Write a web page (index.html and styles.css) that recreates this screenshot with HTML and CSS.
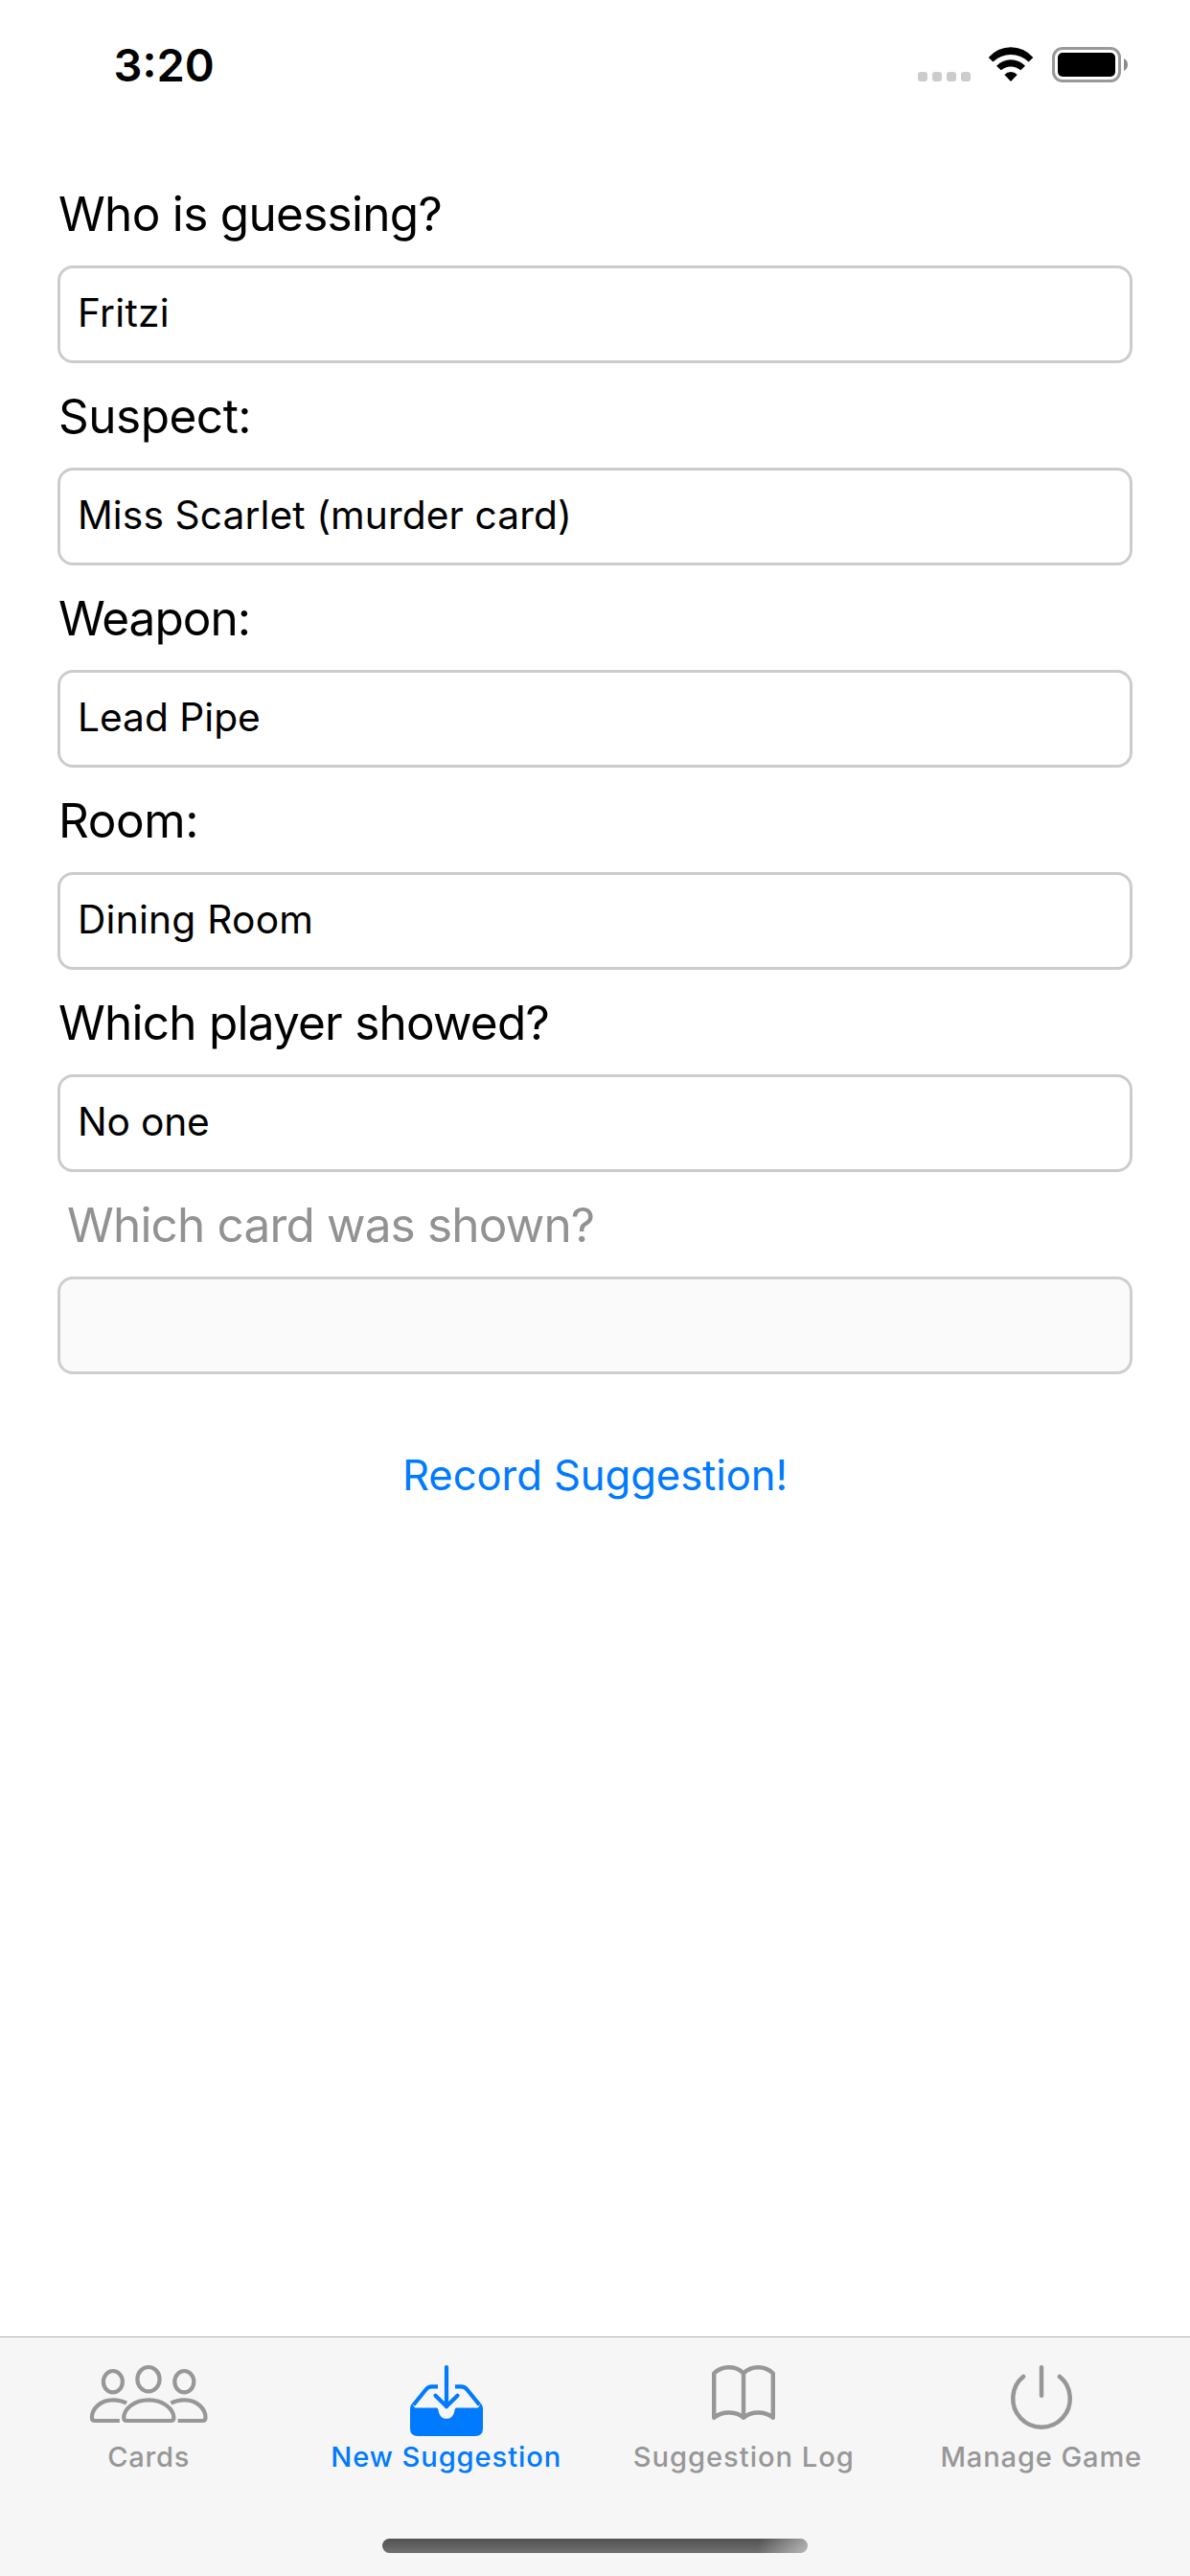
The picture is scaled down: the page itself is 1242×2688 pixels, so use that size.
FILE: index.html
```html
<!DOCTYPE html>
<html lang="en">
<head>
<meta charset="utf-8">
<title>New Suggestion</title>
<link rel="stylesheet" href="styles.css">
</head>
<body>
<div class="screen">
  <header class="status">
    <span class="time">3:20</span>
    <div class="status-icons">
      <svg class="cell" width="55" height="37" viewBox="0 0 55 37" fill="#ccc">
        <rect x="0" y="26" width="10" height="10" rx="3"/><rect x="15" y="26" width="10" height="10" rx="3"/><rect x="30" y="26" width="10" height="10" rx="3"/><rect x="45" y="26" width="10" height="10" rx="3"/>
      </svg>
      <svg class="wifi" width="48" height="37" viewBox="0 0 48 37">
        <path d="M.7 11.1A30.5 30.5 0 0 1 47.3 11.1L42.6 15.5A27 27 0 0 0 5.4 15.5Z"/>
        <path d="M9 19.7A20.5 20.5 0 0 1 39 19.7L34.2 24.3A15.3 15.3 0 0 0 13.8 24.3Z"/>
        <path d="M17.3 29.1A9 9 0 0 1 30.7 29.1L24 36Z"/>
      </svg>
      <svg class="battery" width="80" height="37" viewBox="0 0 80 37">
        <rect x="1.5" y="1.5" width="69" height="34" rx="9.5" fill="none" stroke="#999" stroke-width="3"/>
        <rect x="6" y="6" width="60" height="25" rx="5"/>
        <path d="M75 12C77.8 13.2 79 15.8 79 18.5S77.8 23.8 75 25Z" fill="#8c8c8c"/>
      </svg>
    </div>
  </header>

  <main class="form">
    <div class="label ls-who">Who is guessing?</div>
    <div class="field ls-fritzi">Fritzi</div>
    <div class="label ls-suspect">Suspect:</div>
    <div class="field ls-miss">Miss Scarlet (murder card)</div>
    <div class="label ls-weapon">Weapon:</div>
    <div class="field">Lead Pipe</div>
    <div class="label ls-room">Room:</div>
    <div class="field ls-dining">Dining Room</div>
    <div class="label">Which player showed?</div>
    <div class="field ls-none">No one</div>
    <div class="label label-disabled">Which card was shown?</div>
    <div class="field field-disabled"></div>
    <button class="record" type="button">Record Suggestion!</button>
  </main>

  <nav class="tabs">
    <div class="tab">
      <svg width="130" height="80" viewBox="0 0 130 80" fill="none" stroke="currentColor" stroke-width="4.2">
        <ellipse cx="65" cy="18.7" rx="11.6" ry="12.7"/>
        <ellipse cx="27.9" cy="21.2" rx="10" ry="11.2"/>
        <ellipse cx="102.3" cy="21.2" rx="10" ry="11.2"/>
        <path d="M42 62H88.5Q91.4 62 91.4 58.8C91 49.5 80.5 40.4 65.2 40.4S39.5 49.5 39.2 58.8Q39.2 62 42 62Z"/>
        <path d="M42 43.6C37.8 41.3 33.2 40.3 28 40.3C14.5 40.3 6 49.8 5.9 58.5Q5.9 62 9 62H34.8"/>
        <path d="M88.4 43.6C92.6 41.3 97.2 40.3 102.4 40.3C115.9 40.3 124.4 49.8 124.5 58.5Q124.5 62 121.4 62H95.6"/>
      </svg>
      <span class="ls-cards">Cards</span>
    </div>
    <div class="tab tab-active">
      <svg width="130" height="80" viewBox="0 0 130 80" fill="none" stroke="currentColor" stroke-width="4.2">
        <path d="M56 26.4H49.5Q46 26.4 43.5 29.5L30.5 45.5"/>
        <path d="M74 26.4H80.5Q84 26.4 86.5 29.5L99.5 45.5"/>
        <path d="M65 6V47.500M53.500 35.800L65 47L76.500 35.800" stroke-linecap="round" stroke-linejoin="round"/>
        <path d="M27 49Q27 46 29 44L32 48.4H54.5Q56 48.4 56.4 50.5C57.2 56.5 60 59.8 65 59.8S72.8 56.5 73.6 50.5Q74 48.4 75.5 48.4H98L101 44Q103 46 103 49V70Q103 78 95 78H35Q27 78 27 70Z" fill="currentColor" stroke="none"/>
      </svg>
      <span class="ls-new">New Suggestion</span>
    </div>
    <div class="tab">
      <svg width="130" height="80" viewBox="0 0 130 80" fill="none" stroke="currentColor" stroke-width="4.4" stroke-linecap="round" stroke-linejoin="round">
        <path d="M34.2 58.8V12.5C42.5 4.2 57 4.2 65 12.5C73 4.2 87.5 4.2 95.8 12.5V58.8C87.5 51.8 73 51.8 65 58.8C57 51.8 42.5 51.8 34.2 58.8ZM65 12.5V58.8"/>
      </svg>
      <span class="ls-log">Suggestion Log</span>
    </div>
    <div class="tab">
      <svg width="130" height="80" viewBox="0 0 130 80" fill="none" stroke="currentColor" stroke-width="4.5" stroke-linecap="round">
        <path d="M65 6.2V35.8M46.2 15.8A29.8 29.8 0 1 0 83.8 15.8"/>
      </svg>
      <span class="ls-manage">Manage Game</span>
    </div>
  </nav>
  <div class="home"><div class="home-bar"></div></div>
</div>
</body>
</html>
```
FILE: styles.css
```css
* { box-sizing: border-box; }
body { margin: 0; background: #fff; color: #000; font-family: Inter, "Liberation Sans", sans-serif; }
.screen { width: 1242px; height: 2688px; display: flex; flex-direction: column; overflow: hidden; }
svg { display: block; flex: none; }

.status { height: 135px; display: flex; align-items: center; justify-content: space-between; padding: 0 64px 0 118.5px; }
.time { font-size: 47px; font-weight: 600; line-height: 60px; }
.status-icons { display: flex; }
.wifi { margin-left: 18px; }
.battery { margin-left: 19px; }

.form { flex: 1; padding: 33px 60px 0; display: flex; flex-direction: column; }
.label { height: 109px; line-height: 111px; padding-left: 1px; font-size: 49.5px; letter-spacing: -.77px; white-space: nowrap; }
.label-disabled { padding-left: 10px; color: #929292; letter-spacing: -.83px; }
.field { height: 102px; border: 3px solid #ccc; border-radius: 16px; padding: 0 18px; font-size: 40.7px; line-height: 94px; white-space: nowrap; }
.field-disabled { background: #fafafa; border-color: #cecece; }
.record { align-self: center; margin-top: 66px; padding: 0; border: 0; background: none; color: #007aff; font: 400 43.6px/80px Inter, sans-serif; letter-spacing: -.08px; }

.tabs { height: 192px; display: grid; grid-template-columns: repeat(4, 1fr); background: #f6f6f6; border-top: 1px solid #b2b2b2; }
.tab { display: flex; flex-direction: column; align-items: center; padding-top: 25px; color: #979797; font-size: 29.1px; font-weight: 500; line-height: 39px; white-space: nowrap; }
.tab-active { color: #007aff; }
.home { height: 58px; padding-top: 19px; background: #f6f6f6; }
.home-bar { width: 444px; height: 15px; margin: 0 auto; border-radius: 8px; background: linear-gradient(105deg, transparent 88%, rgba(255,255,255,.5) 100%), linear-gradient(#505250, #707070); }

.ls-who { letter-spacing: -.7px; }
.ls-suspect { letter-spacing: -.49px; }
.ls-weapon { letter-spacing: -1px; }
.ls-room { letter-spacing: -.4px; }
.ls-fritzi { letter-spacing: .26px; }
.ls-miss { letter-spacing: .1px; }
.ls-dining { letter-spacing: .24px; }
.ls-none { letter-spacing: -.18px; }
.ls-cards { letter-spacing: .78px; }
.ls-new { letter-spacing: .92px; }
.ls-log { letter-spacing: .98px; }
.ls-manage { letter-spacing: .86px; }
```
